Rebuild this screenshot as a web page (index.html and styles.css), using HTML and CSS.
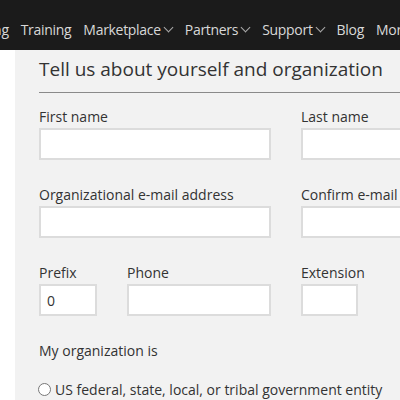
FILE: index.html
```html
<!DOCTYPE html>
<html lang="en">
<head>
  <meta charset="UTF-8" />
  <title>Register - Tell us about yourself</title>
  <link rel="stylesheet" href="styles.css">
</head>
<body>

  <nav class="topnav">
    <ul class="nav-list">
      <li>Licensing</li>
      <li>Training</li>
      <li class="has-menu">Marketplace</li>
      <li class="has-menu">Partners</li>
      <li class="has-menu">Support</li>
      <li>Blog</li>
      <li class="has-menu">More</li>
    </ul>
  </nav>

  <main class="panel">
    <h2>Tell us about yourself and organization</h2>

    <form id="profileForm" class="form-grid">
      <div class="field">
        <label for="firstName">First name</label>
        <input type="text" id="firstName" name="firstName" />
      </div>
      <div class="field">
        <label for="lastName">Last name</label>
        <input type="text" id="lastName" name="lastName" />
      </div>

      <div class="field">
        <label for="email">Organizational e-mail address</label>
        <input type="email" id="email" name="email" />
      </div>
      <div class="field">
        <label for="confirmEmail">Confirm e-mail address</label>
        <input type="email" id="confirmEmail" name="confirmEmail" />
      </div>

      <div class="phone-row">
        <div class="field prefix">
          <label for="prefix">Prefix</label>
          <input type="text" id="prefix" name="prefix" value="0" />
        </div>
        <div class="field grow">
          <label for="phone">Phone</label>
          <input type="tel" id="phone" name="phone" />
        </div>
      </div>
      <div class="field ext">
        <label for="extension">Extension</label>
        <input type="text" id="extension" name="extension" />
      </div>

      <fieldset class="org-type">
        <legend>My organization is</legend>
        <label class="radio"><input type="radio" name="orgType" value="gov" /> US federal, state, local, or tribal government entity</label>
      </fieldset>
    </form>
  </main>

</body>
</html>
```

FILE: styles.css
```css
body {
  margin: 0;
  background: #fff;
  font-family: "Open Sans", "Noto Sans", sans-serif;
  color: #333;
  overflow: hidden;
}
.topnav {
  background: #1b1b1b;
  height: 50px;
  overflow: hidden;
}
.nav-list {
  list-style: none;
  margin: 0 0 0 -49px;
  padding: 8px 0 0 0;
  display: flex;
  gap: 12px;
  white-space: nowrap;
  height: 50px;
  align-items: center;
  box-sizing: border-box;
  font-size: 14px;
  letter-spacing: -0.3px;
  color: #d8d8d8;
}
.has-menu::after {
  content: "";
  display: inline-block;
  width: 6px;
  height: 6px;
  margin: 0 1px 4px 4px;
  border-right: 1px solid #aaa;
  border-bottom: 1px solid #aaa;
  transform: rotate(45deg);
}
.panel {
  margin-left: 15px;
  background: #f2f2f2;
  padding: 6px 0 0 24px;
  min-height: 400px;
}
h2 {
  margin: 0;
  font-size: 19px;
  font-weight: normal;
  color: #333;
  padding-bottom: 10px;
  border-bottom: 1px solid #8a8a8a;
  white-space: nowrap;
}
.form-grid {
  display: grid;
  grid-template-columns: 232px 232px;
  column-gap: 30px;
  row-gap: 25px;
  padding-top: 14px;
}
.field {
  display: flex;
  flex-direction: column;
  min-width: 0;
}
.field label {
  font-size: 14px;
  line-height: 20px;
  margin-bottom: 1px;
  white-space: nowrap;
}
.field input {
  box-sizing: border-box;
  width: 100%;
  height: 32px;
  border: 2px solid #dcdcdc;
  background: #fff;
  padding: 0 6px;
  font: inherit;
  font-size: 14px;
  color: #333;
}
.phone-row {
  display: flex;
  gap: 30px;
}
.prefix {
  width: 58px;
}
.grow {
  flex: 1;
}
.ext {
  width: 57px;
}
.org-type {
  grid-column: 1 / 3;
  border: none;
  margin: 0;
  padding: 6px 0 0 0;
}
.org-type legend {
  padding: 0;
  font-size: 14px;
  margin-bottom: 14px;
}
.radio {
  display: flex;
  align-items: center;
  gap: 4px;
  margin-left: -1px;
  font-size: 14px;
  white-space: nowrap;
}
.radio input {
  margin: 0;
  width: 13px;
  height: 13px;
}
```
